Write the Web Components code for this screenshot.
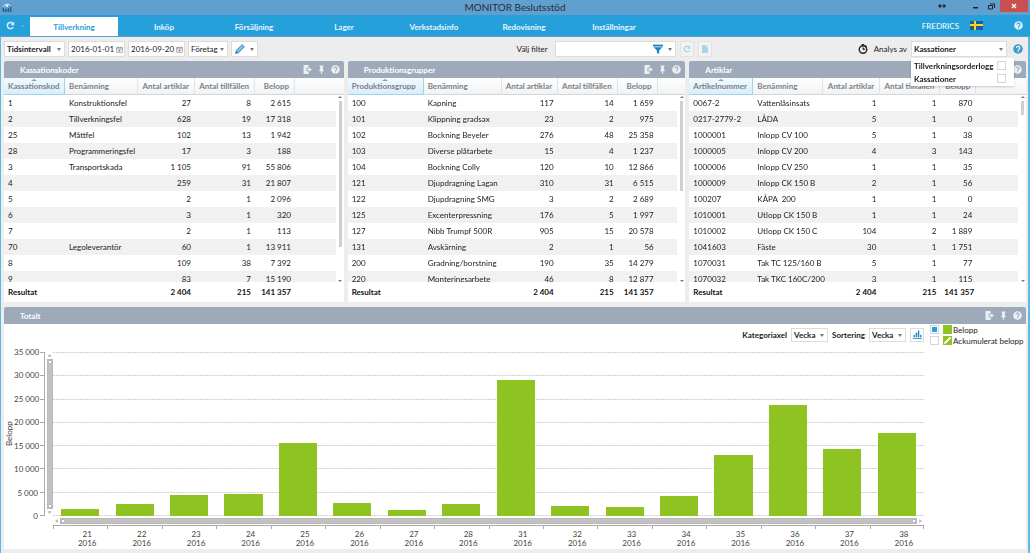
<!DOCTYPE html>
<html lang="sv">
<head>
<meta charset="utf-8">
<title>MONITOR Beslutsstöd</title>
<style>
  html { height: 100%; }
  body {
    margin: 0; min-height: 100%; display: flex; flex-direction: column;
    font: 8px/12px Lato, "Open Sans", sans-serif; color: #222; background: #ededed;
    box-sizing: border-box;
    --blue: #26a0da; --bar: #9eaaba; --green: #8ec322;
  }
  .work { flex: 1; display: flex; flex-direction: column; border-left: 1px solid #5fb8e6; border-right: 2px solid #5fb8e6; padding: 0 2px 4px 3px; }
  .lists { display: grid; grid-template-columns: 340fr 338fr 337fr; gap: 4px; margin-bottom: 5px; }
  .total { flex: 1; }
</style>
</head>
<body>
<title-bar>MONITOR Beslutsstöd</title-bar>
<main-menu></main-menu>
<div class="work">
  <tool-bar></tool-bar>
  <div class="lists">
    <data-panel heading="Kassationskoder"><data-list name="codes"></data-list></data-panel>
    <data-panel heading="Produktionsgrupper"><data-list name="groups"></data-list></data-panel>
    <data-panel heading="Artiklar"><data-list name="articles"></data-list></data-panel>
  </div>
  <data-panel class="total" heading="Totalt"><bar-chart></bar-chart></data-panel>
</div>

<script>
const define = (name, html, init) => {
  const tpl = document.createElement('template');
  tpl.innerHTML = html;
  customElements.define(name, class extends HTMLElement {
    connectedCallback() {
      if (this.shadowRoot) return;
      this.attachShadow({ mode: 'open' }).appendChild(tpl.content.cloneNode(true));
      if (init) init(this, this.shadowRoot);
    }
  });
};

const controlCss = `
  *, *::before { box-sizing: border-box; }
  button, select, input { font: inherit; color: #222; margin: 0; border-radius: 0; outline: 0; }
  select, .btn, .field { height: 16px; border: 1px solid #dcdcdc; background: #fff; padding: 0 3px; }
  select { appearance: none; padding: 0 8px 0 2px; }
  .drop { position: relative; display: block; }
  .drop select { width: 100%; display: block; }
  .drop::after { content: ""; position: absolute; right: 4px; top: 50%; margin-top: -1px; border: 2px solid transparent; border-top: 3px solid #777; border-bottom: 0; pointer-events: none; }
  .btn { display: flex; align-items: center; justify-content: center; gap: 5px; }
  input[type=checkbox] { appearance: none; width: 9px; height: 9px; border: 1px solid #d5d5d5; background: #fff; flex: none; }
  input[type=checkbox]:checked { background: #26a0da content-box; padding: 1px; }
`;

/* ---------- icons ---------- */
const ICONS = {
  help: '<circle cx="8" cy="8" r="7.6" fill="currentColor"/><path d="M5.4 6.3c0-3.4 5.4-3.3 5.4 0 0 2-2.6 2-2.6 4" fill="none" stroke="var(--mark,#9eaaba)" stroke-width="1.8"/><circle cx="8.1" cy="12.2" r="1.1" fill="var(--mark,#9eaaba)"/>',
  pin: '<path d="M4.500 1h7v1.800h-1v5l1.500 2V11H9v4.500H7V11H4V9.800l1.500-2v-5h-1z" fill="currentColor"/>',
  exit: '<path d="M1 0h9v5H6v6h4v5H1z" fill="currentColor"/><path d="M7 6.700h4V4l4.800 4-4.800 4V9.300H7z" fill="currentColor"/>',
  refresh: '<path d="M12.300 4.500A5.600 5.600 0 1 0 12.800 11" fill="none" stroke="currentColor" stroke-width="2.600"/><path d="M14.500 1v6.500H8.200z" fill="currentColor"/>',
  page: '<path d="M2 0h7.500v4.500H14V16H2z" fill="currentColor"/><path d="M10.500 0L14 3.500h-3.500z" fill="currentColor"/>',
  funnel: '<path d="M0 1h16v3H0z" fill="currentColor"/><path d="M1 5h14L9.800 10.500V16l-3.600-2v-3.500z" fill="currentColor"/>',
  pencil: '<path d="M1 15l1.200-4.800L11.500 1 15 4.500 5.800 13.800z" fill="#7fc0e4" stroke="#1b7fb8" stroke-width="1.400"/><path d="M1 15l1-3.500 2.500 2.500z" fill="#1b7fb8"/>',
  calendar: '<path d="M1.500 3.500h13v11h-13zM1.500 6.500h13M4.500 1v3M11.500 1v3M5 10h6M8 8v5.500" fill="none" stroke="#666" stroke-width="1.200"/>',
  timer: '<circle cx="8" cy="8.800" r="6" fill="none" stroke="#222" stroke-width="2.200"/><path d="M8 9V5.500L11 8.800z" fill="#222" stroke="#222"/><path d="M6 0h4v2.500H6zM12 1.500l2.500 2.500-1.500 1.500L11 3z" fill="#222"/>',
  chart: '<path d="M0 15.200h16" stroke="#1b85bd" stroke-width="1.500"/><path d="M1 9h2.500v4H1zM4.800 5h2.500v8H4.800zM8.600 1h2.500v12H8.600zM12.400 9h2.500v4h-2.500z" fill="#1b85bd"/>',
  app: '<path d="M2 8a6.500 6.500 0 0 1 12-1" fill="none" stroke="#d9edf8" stroke-width="1.500"/><circle cx="8" cy="6" r="2" fill="#eaf6fc"/><path d="M1 9h2.500v7H1zM5 11h2.500v5H5zM9 10h2.500v6H9zM12.800 7H15v9h-2.200z" fill="#15648f"/>'
};
define('bi-icon', '<style>:host{display:block;flex:none;width:9px;height:9px}svg{display:block;width:100%;height:100%}</style>',
  (el, root) => root.innerHTML += `<svg viewBox="0 0 16 16" aria-hidden="true">${ICONS[el.getAttribute('name')]}</svg>`);

/* ---------- title bar ---------- */
define('title-bar', `
<style>
  :host { display: grid; grid-template-columns: 1fr auto 1fr; height: 15px; background: #619fcf; color: #262f38; font-size: 10px; line-height: 15px; }
  bi-icon { margin: 2px; width: 10px; height: 10px; }
  .ctl { display: flex; justify-content: flex-end; height: 12px; margin-right: 2px; }
  button { border: 0; padding: 0; background: none; width: 16px; display: grid; place-items: center; }
  .resize { margin-right: 17px; }
  .close { width: 28px; background: #c9504e; margin-left: 1px; }
  svg { display: block; }
</style>
<bi-icon name="app"></bi-icon><div><slot></slot></div>
<div class="ctl">
  <button class="resize" aria-label="Resize"><svg width="8" height="6" viewBox="0 0 8 6"><path d="M0 3l2.500-2.500v2h3v-2L8 3 5.500 5.500v-2h-3v2z" fill="#222"/></svg></button>
  <button aria-label="Minimera"><svg width="7" height="6"><path d="M1 4h5v1.500H1z" fill="#222"/></svg></button>
  <button aria-label="Återställ"><svg width="7" height="7"><path d="M2 1h4.500v4M.500 2.500h4v3.500h-4z" fill="none" stroke="#222"/></svg></button>
  <button class="close" aria-label="Stäng"><svg width="6" height="6"><path d="M1 1l4 4M5 1L1 5" stroke="#fff" stroke-width="1.300"/></svg></button>
</div>`);

/* ---------- main menu ---------- */
define('main-menu', `
<style>
  :host { display: flex; height: 22px; background: var(--blue); color: #fff; border-bottom: 1px solid #5b9fc8; box-sizing: border-box; }
  .refresh { width: 30px; display: flex; align-items: center; gap: 6px; padding: 0 0 0 6px; box-sizing: border-box; background: none; border: 0; color: #d9f0fb; }
  .refresh::after { content: ""; border: 2px solid transparent; border-top: 2px solid #7fa9c0; border-bottom: 0; }
  nav { display: flex; gap: 2px; padding-top: 2px; }
  a { width: 88px; text-align: center; line-height: 20px; font-weight: 700; color: #e6f5fd; text-decoration: none; }
  a.on { background: #fff; color: #26a0da; }
  .user { margin-left: auto; display: flex; align-items: center; padding-right: 7px; }
  .flag { margin: 0 31px 0 11px; display: block; }
  bi-icon { --mark: #26a0da; color: #d9f0fb; }
</style>
<button class="refresh" aria-label="Uppdatera"><bi-icon name="refresh"></bi-icon></button>
<nav></nav>
<div class="user"><span>FREDRICS</span>
<svg class="flag" width="13" height="9"><path d="M0 0h13v9H0z" fill="#1b5d96"/><path d="M4 0h2v9H4zM0 3h13v2H0z" fill="#f5d327"/></svg>
<bi-icon name="help"></bi-icon></div>`,
(el, root) => {
  root.querySelector('nav').innerHTML = ['Tillverkning', 'Inköp', 'Försäljning', 'Lager', 'Verkstadsinfo', 'Redovisning', 'Inställningar']
    .map((t, i) => `<a href="#"${i ? '' : ' class="on"'}>${t}</a>`).join('');
});

/* ---------- toolbar ---------- */
define('tool-bar', `
<style>${controlCss}
  :host { display: flex; align-items: center; height: 24px; gap: 3px; padding-right: 3px; }
  .interval { width: 61px; } .interval select { font-weight: 700; }
  .date { display: flex; align-items: center; width: 57px; padding: 0 1px 0 2px; }
  .date input { border: 0; padding: 0; min-width: 0; flex: 1; background: none; }
  .date bi-icon { width: 7px; height: 7px; }
  .company { width: 40px; }
  .filter { display: flex; align-items: center; gap: 5px; width: 121px; }
  .filter input { flex: 1; min-width: 0; border: 0; padding: 0; background: none; }
  .caret { border: 2px solid transparent; border-top: 3px solid #777; border-bottom: 0; }
  .search { margin-left: auto; display: flex; align-items: center; gap: 4px; }
  .search label { margin-right: 3px; }
  .search .btn { width: 14px; background: #f3f3f3; border-color: #e3e3e3; color: #a9d3e8; padding: 0; }
  .analysis { margin-left: 143px; display: flex; align-items: center; gap: 4px; }
  .analysis > label { margin-left: 2px; }
  .choose { position: relative; width: 96px; margin-right: 2px; } .choose select { font-weight: 700; }
  .menu { position: absolute; z-index: 3; left: 0; top: 17px; width: 103px; background: #fff; padding: 1px 8px 1px 3px; box-shadow: 0 1px 2px #0003; font-weight: 700; color: #222; }
  .menu label { display: flex; justify-content: space-between; align-items: center; height: 13px; white-space: nowrap; }
  .help { color: #3d9cc5; --mark: #fff; }
  bi-icon { width: 8px; height: 8px; } .big { width: 10px; height: 10px; }
</style>
<div class="drop interval"><select aria-label="Intervall"><option>Tidsintervall</option></select></div>
<div class="field date"><input value="2016-01-01" aria-label="Från"><bi-icon name="calendar"></bi-icon></div>
<div class="field date"><input value="2016-09-20" aria-label="Till"><bi-icon name="calendar"></bi-icon></div>
<div class="drop company"><select aria-label="Företag"><option>Företag</option></select></div>
<button class="btn" aria-label="Redigera"><bi-icon class="big" name="pencil"></bi-icon><i class="caret"></i></button>
<div class="search"><label for="f">Välj filter</label>
  <div class="field filter"><input id="f"><bi-icon class="big" name="funnel" style="color:#1b85bd"></bi-icon><i class="caret"></i></div>
  <button class="btn" aria-label="Ladda om"><bi-icon name="refresh"></bi-icon></button>
  <button class="btn" aria-label="Ny"><bi-icon name="page"></bi-icon></button></div>
<div class="analysis"><bi-icon class="big" name="timer"></bi-icon><label for="a">Analys av</label>
  <div class="choose"><div class="drop"><select id="a"><option>Kassationer</option></select></div>
    <div class="menu"><label>Tillverkningsorderlogg<input type="checkbox"></label><label>Kassationer<input type="checkbox"></label></div></div>
  <bi-icon class="big help" name="help"></bi-icon></div>`);

/* ---------- panel ---------- */
define('data-panel', `
<style>
  :host { display: flex; flex-direction: column; background: #fff; min-width: 0; }
  header { height: 17px; box-sizing: border-box; background: var(--bar); border-radius: 2px 2px 0 0; display: flex; align-items: center; gap: 5px; padding: 0 4px 0 16px; color: #fff; }
  h2 { margin: 0 auto 0 0; font: inherit; font-weight: 700; }
  bi-icon { color: #edf0f3; }
</style>
<header><h2></h2><bi-icon name="exit"></bi-icon><bi-icon name="pin"></bi-icon><bi-icon name="help"></bi-icon></header>
<slot></slot>`, (el, root) => root.querySelector('h2').textContent = el.getAttribute('heading'));

/* ---------- data list ---------- */
const LISTS = {
  codes: { key: 'Kassationskod', widths: [61, 73, 57, 60, 40], thumb: 146, rows: `1|Konstruktionsfel|27|8|2 615
2|Tillverkningsfel|628|19|17 318
25|Måttfel|102|13|1 942
28|Programmeringsfel|17|3|188
3|Transportskada|1 105|91|55 806
4||259|31|21 807
5||2|1|2 096
6||3|1|320
7||2|1|113
70|Legoleverantör|60|1|13 911
8||109|38|7 392
9||83|7|15 190` },
  groups: { key: 'Produktionsgrupp', widths: [76, 78, 56, 60, 40], thumb: 90, rows: `100|Kapning|117|14|1 659
101|Klippning gradsax|23|2|975
102|Bockning Beyeler|276|48|25 358
103|Diverse plåtarbete|15|4|1 237
104|Bockning Colly|120|10|12 866
121|Djupdragning Lagan|310|31|6 515
122|Djupdragning SMG|3|2|2 689
125|Excenterpressning|176|5|1 997
127|Nibb Trumpf 500R|905|15|20 578
131|Avskärning|2|1|56
200|Gradning/borstning|190|35|14 279
220|Monteringsarbete|46|8|12 877` },
  articles: { key: 'Artikelnummer', widths: [64, 70, 57, 60, 36], thumb: 14, rows: `0067-2|Vattenlåsinsats|1|1|870
0217-2779-2|LÅDA|5|1|0
1000001|Inlopp CV 100|5|1|38
1000005|Inlopp CV 200|4|3|143
1000006|Inlopp CV 250|1|1|35
1000009|Inlopp CK 150 B|2|1|56
100207|KÅPA&nbsp; 200|1|1|0
1010001|Utlopp CK 150 B|1|1|24
1010002|Utlopp CK 150 C|104|2|1 889
1041603|Fäste|30|1|1 751
1070031|Tak TC 125/160 B|5|1|77
1070032|Tak TKC 160C/200|3|1|115` }
};
define('data-list', `
<style>
  :host { display: block; position: relative; }
  .view { height: 224px; overflow: hidden; }
  table { width: 100%; table-layout: fixed; border-collapse: separate; border-spacing: 0; }
  th, td { padding: 0 4px; height: 16px; line-height: 12px; text-align: left; white-space: nowrap; box-sizing: border-box; }
  th:nth-child(n+3):nth-child(-n+5), td:nth-child(n+3) { text-align: right; }
  tbody tr:nth-child(even) td:not(:last-child) { background: #f1f1f1; }
  thead th { position: sticky; top: 0; z-index: 1; height: 17px; padding: 0 5px 0 4px; font-weight: 700; color: #7b8187; background: linear-gradient(#fff, #f0f2f4); border-right: 1px solid #e1e4e6; border-bottom: 1px solid #d3d7da; }
  thead th:first-child { background: linear-gradient(#f3fafd, #d9eefa); border-color: #9fd4ee; }
  thead th:first-child::before { content: ""; position: absolute; left: 50%; top: 1px; border: 3px solid transparent; border-bottom: 2px solid #6fa5c0; border-top: 0; margin-left: -3px; }
  thead th:nth-child(n+6) { border-right: 0; }
  tfoot td { position: sticky; bottom: 0; height: 20px; background: #fff; font-weight: 700; color: #111; }
  .bar { position: absolute; right: 1px; top: 18px; height: 186px; width: 5px; display: flex; flex-direction: column; align-items: center; }
  .bar::before, .bar::after { content: ""; border: 2px solid transparent; }
  .bar::before { border-bottom: 2px solid #777; border-top: 0; }
  .bar::after { border-top: 2px solid #777; border-bottom: 0; margin-top: auto; }
  .thumb { width: 3px; margin-top: 3px; background: #cfcfcf; }
</style>
<div class="view"><table></table></div><div class="bar"><div class="thumb"></div></div>`,
(el, root) => {
  const d = LISTS[el.getAttribute('name')];
  root.querySelector('.thumb').style.height = d.thumb + 'px';
  const row = c => `<tr>${c.map(v => `<td>${v}</td>`).join('')}<td></td><td></td></tr>`;
  root.querySelector('table').innerHTML =
    `<colgroup>${d.widths.map(w => `<col style="width:${w}px">`).join('')}<col><col style="width:8px"></colgroup>
    <thead><tr>${[d.key, 'Benämning', 'Antal artiklar', 'Antal tillfällen', 'Belopp', '', ''].map(t => `<th>${t}</th>`).join('')}</tr></thead>
    <tbody>${d.rows.split('\n').map(r => row(r.split('|'))).join('')}</tbody>
    <tfoot>${row(['Resultat', '', '2 404', '215', '141 357'])}</tfoot>`;
});

/* ---------- chart ---------- */
const WEEKS = [[21, 1500], [22, 2500], [23, 4500], [24, 4700], [25, 15500], [26, 2750], [27, 1200], [28, 2500],
  [31, 29000], [32, 2150], [33, 1950], [34, 4250], [35, 13000], [36, 23700], [37, 14400], [38, 17800]];
define('bar-chart', `
<style>${controlCss}
  :host { display: grid; grid-template-columns: 1fr 96px; gap: 6px; flex: 1; }
  .left { display: flex; flex-direction: column; min-width: 0; }
  .controls { display: flex; justify-content: flex-end; align-items: center; gap: 4px; height: 21px; font-weight: 700; margin-bottom: 7px; }
  .controls .drop { width: 37px; }
  select, .btn { height: 14px; } .btn { width: 14px; padding: 0; }
  .legend label { display: flex; align-items: center; height: 11px; white-space: nowrap; }
  .legend svg { margin: 0 1px 0 4px; flex: none; }
  .chart { flex: 1; display: grid; grid-template-columns: 10px 24px 8px 7px 1fr; grid-template-rows: minmax(100px, 1fr) auto; color: #444; }
  .title { writing-mode: vertical-rl; transform: rotate(180deg); text-align: center; line-height: 10px; }
  .scale { display: flex; flex-direction: column; justify-content: space-between; text-align: right; }
  .scale span { height: 0; line-height: 0; white-space: nowrap; }
  .ticks { display: flex; flex-direction: column; justify-content: space-between; border-right: 1px solid #aaa; margin: 0 1px 0 2px; }
  .ticks i { height: 1px; background: #aaa; }
  .v, .h { display: flex; align-items: center; }
  .v { flex-direction: column; padding: 2px 0; } .v b { flex: 1; width: 6px; }
  b { background: #c2c2c2; border: 1px solid #b8b8b8; display: flex; justify-content: space-between; margin: 1px; }
  .v b { flex-direction: column; }
  b i { width: 4px; height: 4px; background: #fff; border: 1px solid #bbb; }
  .arrow { width: 4px; height: 4px; background: #b5b5b5; }
  .up { clip-path: polygon(50% 0, 100% 70%, 0 70%); } .down { clip-path: polygon(0 30%, 100% 30%, 50% 100%); }
  .west { clip-path: polygon(0 50%, 70% 0, 70% 100%); } .east { clip-path: polygon(30% 0, 100% 50%, 30% 100%); }
  .plot { display: grid; } .plot > div { grid-area: 1 / 1; }
  .grid { display: flex; flex-direction: column; justify-content: space-between; }
  .grid i { height: 1px; background: repeating-linear-gradient(90deg, #d3d3d3 0 2px, #f3f3f3 2px 3px); }
  .bars, .weeks { display: grid; grid-template-columns: repeat(16, 1fr); }
  .bars { align-items: end; } .bars i { width: 70%; margin: 0 auto; background: var(--green); }
  .xaxis { grid-column: 5; }
  .h { height: 6px; margin: 2px 2px 1px; } .h b { flex: 1; height: 6px; align-items: center; }
  .weeks { border-top: 1px solid #aaa; }
  .weeks span { text-align: center; line-height: 9px; padding: 4px 0 1px 14px; position: relative; }
  .weeks span::before, .weeks span:last-child::after { content: ""; position: absolute; left: 0; top: 0; width: 1px; height: 3px; background: #aaa; }
  .weeks span:last-child::after { left: auto; right: 0; }
</style>
<div class="left">
  <div class="controls"><label for="k">Kategoriaxel</label><div class="drop"><select id="k"><option>Vecka</option></select></div>
    <label for="s">Sortering</label><div class="drop"><select id="s"><option>Vecka</option></select></div>
    <button class="btn" aria-label="Diagramtyp"><bi-icon name="chart"></bi-icon></button></div>
  <div class="chart">
    <div class="title">Belopp</div><div class="scale"></div><div class="ticks"></div>
    <div class="v"><i class="arrow up"></i><b><i></i><i></i></b><i class="arrow down"></i></div>
    <div class="plot"><div class="grid"></div><div class="bars"></div></div>
    <div class="xaxis"><div class="h"><i class="arrow west"></i><b><i></i><i></i></b><i class="arrow east"></i></div><div class="weeks"></div></div>
  </div>
</div>
<div class="legend">
  <label><input type="checkbox" checked><svg width="9" height="9"><path d="M0 0h9v9H0z" fill="#8ec322"/></svg>Belopp</label>
  <label><input type="checkbox"><svg width="9" height="9"><path d="M0 0h9v9H0z" fill="#8ec322"/><path d="M1.500 7.500L7.500 1.500" stroke="#fff" stroke-width="2"/></svg>Ackumulerat belopp</label>
</div>`,
(el, root) => {
  const q = s => root.querySelector(s);
  q('.scale').innerHTML = ['35 000', '30 000', '25 000', '20 000', '15 000', '10 000', '5 000', '0'].map(v => `<span>${v}</span>`).join('');
  q('.ticks').innerHTML = q('.grid').innerHTML = '<i></i>'.repeat(8);
  q('.bars').innerHTML = WEEKS.map(w => `<i style="height:${w[1] / 350}%"></i>`).join('');
  q('.weeks').innerHTML = WEEKS.map(w => `<span>${w[0]}<br>2016</span>`).join('');
});
</script>
</body>
</html>
